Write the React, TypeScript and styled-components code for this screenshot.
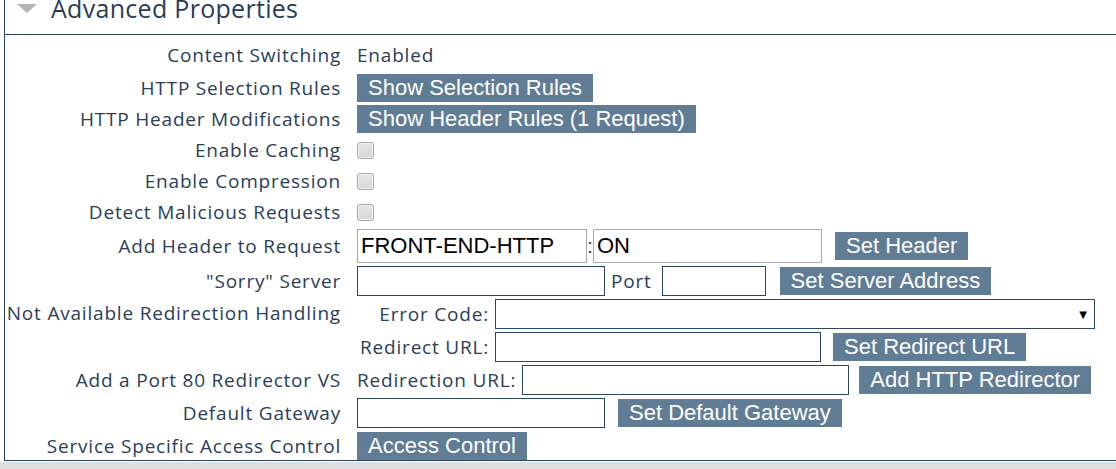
import styled, { createGlobalStyle } from 'styled-components';

const GlobalStyle = createGlobalStyle`
    html, body {
        margin: 0;
        padding: 0;
        background: #ffffff;
    }
    body {
        font-family: "Open Sans", "DejaVu Sans", sans-serif;
        color: #2b3e56;
        overflow: hidden;
    }
`;

const Panel = styled.section`
    margin-left: 4px;
    border-left: 1px solid #2c4560;
    border-bottom: 1px solid #2c4560;
`;

const Header = styled.div`
    height: 34px;
    border-bottom: 1px solid #2c4560;
    display: flex;
    align-items: flex-start;
    overflow: hidden;
`;

const Arrow = styled.span`
    margin: 4px 0 0 12px;
    width: 0;
    height: 0;
    border-left: 10px solid transparent;
    border-right: 10px solid transparent;
    border-top: 9px solid #b4b4b4;
`;

const Title = styled.h2`
    margin: -7px 0 0 14px;
    font-size: 25px;
    letter-spacing: 0.3px;
    line-height: 30px;
    font-weight: 400;
    color: #2a3d56;
`;

const Grid = styled.div`
    display: grid;
    grid-template-columns: 336px 1fr;
    column-gap: 16px;
    row-gap: 3px;
    padding: 4px 0 0 0;
`;

const Label = styled.div<{ $top?: boolean }>`
    font-size: 19px;
    letter-spacing: 0.8px;
    text-align: right;
    white-space: nowrap;
    display: flex;
    justify-content: flex-end;
    align-items: ${p => (p.$top ? 'flex-start' : 'center')};
    padding-top: ${p => (p.$top ? '1px' : '0')};
`;

const Cell = styled.div<{ $h?: number }>`
    display: flex;
    align-items: center;
    min-height: ${p => p.$h ?? 28}px;
`;

const Stack = styled.div`
    display: flex;
    flex-direction: column;
    gap: 3px;
`;

const Value = styled.span`
    font-size: 19px;
    letter-spacing: 0.8px;
`;

const Button = styled.button<{ $ml?: number }>`
    height: 28px;
    padding: 0 11px;
    margin-left: ${p => p.$ml ?? 0}px;
    border: none;
    border-radius: 0;
    background: #607d95;
    color: #ffffff;
    font-family: "Liberation Sans", Arial, sans-serif;
    font-size: 22px;
    line-height: 28px;
    white-space: nowrap;
    cursor: pointer;
`;

const Check = styled.span`
    width: 15px;
    height: 15px;
    border: 1px solid #a8a8a8;
    border-radius: 3px;
    background: linear-gradient(#e6e6e6, #d6d6d6);
    box-shadow: inset 0 0 0 1px #f2f2f2;
    margin-top: 1px;
`;

const Input = styled.input<{ $w: number; $h?: number; $grey?: boolean; $ml?: number }>`
    box-sizing: border-box;
    width: ${p => p.$w}px;
    height: ${p => p.$h ?? 30}px;
    margin: 0 0 0 ${p => p.$ml ?? 0}px;
    padding: 0 3px;
    border: 1px solid ${p => (p.$grey ? '#aaaaaa' : '#2c4560')};
    border-radius: 0;
    font-family: "Liberation Sans", Arial, sans-serif;
    font-size: 22px;
    color: #000000;
    outline: none;
`;

const Colon = styled.span`
    width: 6px;
    font-family: "Liberation Sans", Arial, sans-serif;
    font-size: 20px;
    color: #333;
    text-align: center;
`;

const SubLabel = styled.span<{ $w?: number; $ml?: number; $mr?: number }>`
    font-size: 19px;
    letter-spacing: 0.8px;
    white-space: nowrap;
    text-align: right;
    width: ${p => (p.$w ? `${p.$w}px` : 'auto')};
    margin-left: ${p => p.$ml ?? 0}px;
    margin-right: ${p => p.$mr ?? 6}px;
`;

const Select = styled.div`
    box-sizing: border-box;
    width: 600px;
    height: 30px;
    border: 1px solid #2c4560;
    display: flex;
    align-items: center;
    justify-content: flex-end;
    padding-right: 7px;
    font-size: 10px;
    color: #000;
`;

const Footer = styled.div`
    margin-top: 1px;
    height: 12px;
    background: #dde0e3;
`;

export default function App() {
    return (
        <>
            <GlobalStyle />
            <Panel>
                <Header>
                    <Arrow />
                    <Title>Advanced Properties</Title>
                </Header>
                <Grid>
                    <Label>Content Switching</Label>
                    <Cell $h={32}><Value>Enabled</Value></Cell>

                    <Label>HTTP Selection Rules</Label>
                    <Cell><Button>Show Selection Rules</Button></Cell>

                    <Label>HTTP Header Modifications</Label>
                    <Cell><Button>Show Header Rules (1 Request)</Button></Cell>

                    <Label>Enable Caching</Label>
                    <Cell><Check /></Cell>

                    <Label>Enable Compression</Label>
                    <Cell><Check /></Cell>

                    <Label>Detect Malicious Requests</Label>
                    <Cell><Check /></Cell>

                    <Label>Add Header to Request</Label>
                    <Cell $h={34}>
                        <Input $w={230} $h={34} $grey defaultValue="FRONT-END-HTTP" />
                        <Colon>:</Colon>
                        <Input $w={229} $h={34} $grey defaultValue="ON" />
                        <Button $ml={13}>Set Header</Button>
                    </Cell>

                    <Label>"Sorry" Server</Label>
                    <Cell $h={30}>
                        <Input $w={248} />
                        <SubLabel $ml={6} $mr={10}>Port</SubLabel>
                        <Input $w={104} />
                        <Button $ml={14}>Set Server Address</Button>
                    </Cell>

                    <Label $top>Not Available Redirection Handling</Label>
                    <Stack>
                        <Cell $h={30}>
                            <SubLabel $w={132}>Error Code:</SubLabel>
                            <Select>▼</Select>
                        </Cell>
                        <Cell $h={30}>
                            <SubLabel $w={132}>Redirect URL:</SubLabel>
                            <Input $w={326} />
                            <Button $ml={12}>Set Redirect URL</Button>
                        </Cell>
                    </Stack>

                    <Label>Add a Port 80 Redirector VS</Label>
                    <Cell $h={30}>
                        <SubLabel>Redirection URL:</SubLabel>
                        <Input $w={327} />
                        <Button $ml={10}>Add HTTP Redirector</Button>
                    </Cell>

                    <Label>Default Gateway</Label>
                    <Cell $h={30}>
                        <Input $w={248} />
                        <Button $ml={13}>Set Default Gateway</Button>
                    </Cell>

                    <Label>Service Specific Access Control</Label>
                    <Cell $h={29}><Button>Access Control</Button></Cell>
                </Grid>
            </Panel>
            <Footer />
        </>
    );
}
